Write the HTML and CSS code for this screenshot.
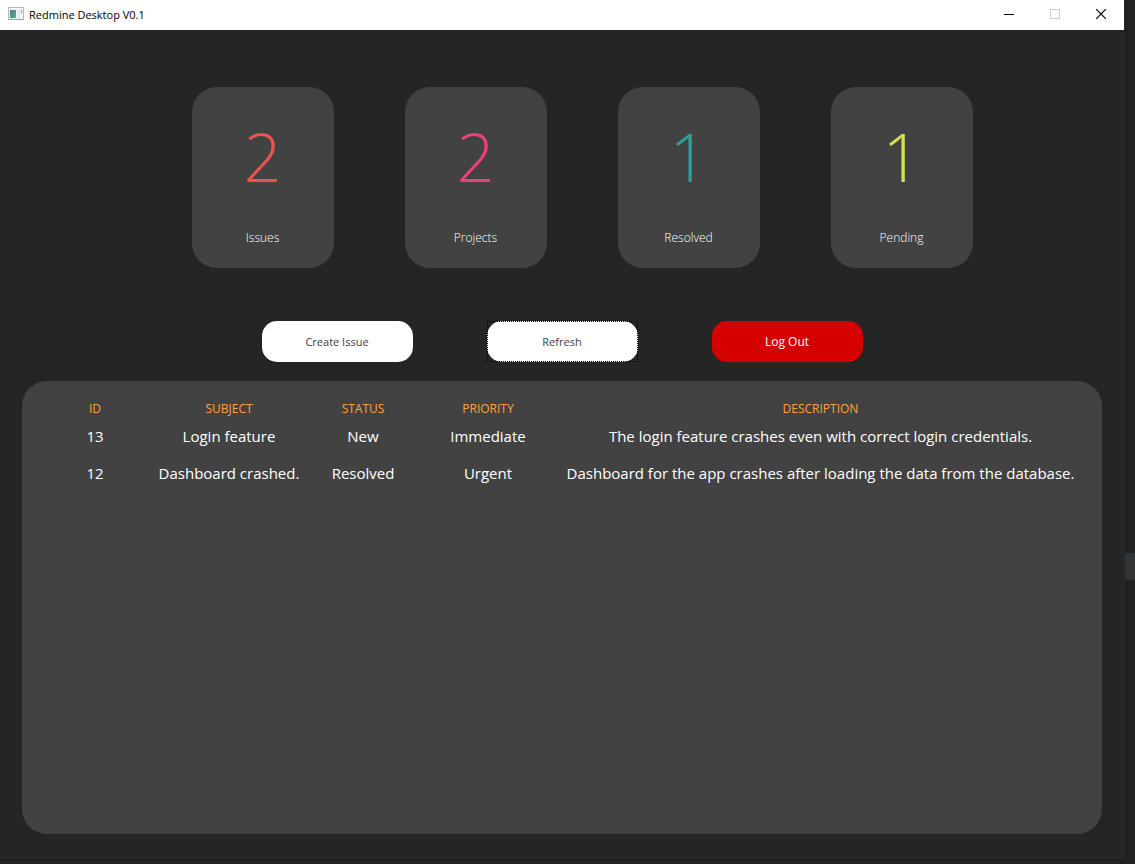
FILE: index.html
```
<!DOCTYPE html>
<html lang="en">
<head>
<meta charset="utf-8">
<title>Redmine Desktop V0.1</title>
<link rel="stylesheet" href="styles.css">
</head>
<body>
<div class="desktop">
  <div class="window">
    <header class="titlebar">
      <svg class="app-icon" width="16" height="14" viewBox="0 0 16 14" aria-hidden="true">
        <defs>
          <linearGradient id="pane" x1="0" y1="0" x2="1" y2="1">
            <stop offset="0" stop-color="#4a7da0"/>
            <stop offset="1" stop-color="#58b080"/>
          </linearGradient>
        </defs>
        <rect x="0.5" y="0.5" width="15" height="12" fill="#f4f5f7" stroke="#b4b8c0"/>
        <rect x="1" y="12" width="14" height="1" fill="#9da1a8"/>
        <rect x="2" y="3" width="6" height="8" fill="url(#pane)"/>
        <rect x="9" y="3" width="3" height="8" fill="#e6e9ee"/>
        <path d="M12.5 3h1.500v5z" fill="#7fb3a0"/>
      </svg>
      <span class="title">Redmine Desktop V0.1</span>
      <div class="controls">
        <button class="control" aria-label="Minimize"><svg width="10" height="10" viewBox="0 0 10 10"><path d="M0 5.5h10" stroke="#000"/></svg></button>
        <button class="control" aria-label="Maximize" disabled><svg width="10" height="10" viewBox="0 0 10 10"><rect x="0.5" y="0.5" width="9" height="9" fill="none" stroke="#ccc"/></svg></button>
        <button class="control" aria-label="Close"><svg width="10" height="10" viewBox="0 0 10 10"><path d="M0 0l10 10M10 0L0 10" stroke="#000" stroke-width="1.2"/></svg></button>
      </div>
    </header>
    <main class="content">
      <section class="stats">
        <div class="card"><span class="count issues">2</span><span class="label">Issues</span></div>
        <div class="card"><span class="count projects">2</span><span class="label">Projects</span></div>
        <div class="card"><span class="count resolved">1</span><span class="label">Resolved</span></div>
        <div class="card"><span class="count pending">1</span><span class="label">Pending</span></div>
      </section>
      <div class="actions">
        <button class="action">Create Issue</button>
        <button class="action focused">Refresh</button>
        <button class="action danger">Log Out</button>
      </div>
      <section class="panel">
        <table class="issue-table">
          <colgroup><col class="c-id"><col class="c-subject"><col class="c-status"><col class="c-priority"><col></colgroup>
          <thead>
            <tr><th>ID</th><th>SUBJECT</th><th>STATUS</th><th>PRIORITY</th><th>DESCRIPTION</th></tr>
          </thead>
          <tbody>
            <tr><td>13</td><td>Login feature</td><td>New</td><td>Immediate</td><td>The login feature crashes even with correct login credentials.</td></tr>
            <tr><td>12</td><td>Dashboard crashed.</td><td>Resolved</td><td>Urgent</td><td>Dashboard for the app crashes after loading the data from the database.</td></tr>
          </tbody>
        </table>
      </section>
    </main>
  </div>
  <div class="behind"><div class="behind-thumb"></div></div>
</div>
</body>
</html>
```
FILE: styles.css
```
* { box-sizing: border-box; }

body {
  margin: 0;
  background: #212121;
  font-family: "Open Sans", "Noto Sans", sans-serif;
}

.desktop {
  display: flex;
  min-height: 100vh;
  padding-bottom: 6px;
}

.window {
  flex: 1;
  display: flex;
  flex-direction: column;
  background: #252525;
  border-bottom: 1px solid #2b2b2b;
}

.behind {
  width: 11px;
  display: flex;
  flex-direction: column;
  padding-top: 553px;
  background: linear-gradient(to right, #1e1e1e, #232323);
  border-left: 1px solid #292929;
}

.behind-thumb {
  height: 27px;
  background: #313437;
}

.titlebar {
  display: flex;
  align-items: center;
  height: 30px;
  padding: 0 0 2px 8px;
  background: #fff;
}

.title {
  margin-left: 5px;
  color: #000;
  font-size: 11px;
}

.controls {
  display: flex;
  align-self: stretch;
  margin-left: auto;
}

.control {
  display: flex;
  align-items: center;
  justify-content: center;
  width: 46px;
  padding: 0;
  border: 0;
  background: none;
}

.content {
  flex: 1;
  display: flex;
  flex-direction: column;
  padding: 57px 22px 23px;
}

.stats {
  display: flex;
  justify-content: center;
  gap: 71px;
  padding-left: 40px;
}

.card {
  display: flex;
  flex-direction: column;
  align-items: center;
  width: 142px;
  height: 181px;
  padding-top: 29px;
  border-radius: 25px;
  background: #424242;
}

.count {
  font-size: 66px;
  font-weight: 300;
  line-height: 80px;
}

.issues { color: #ef5350; }
.projects { color: #ec407a; }
.resolved { color: #26a69a; }
.pending { color: #d4e157; }

.label {
  margin-top: 32px;
  color: #fff;
  font-size: 12px;
  font-weight: 300;
  line-height: 20px;
}

.actions {
  display: flex;
  justify-content: center;
  gap: 74px;
  margin: 53px 0 19px;
}

.action {
  width: 151px;
  height: 41px;
  padding: 0;
  border: 0;
  border-radius: 15px;
  background: #fff;
  color: #424242;
  font-family: inherit;
  font-size: 11px;
}

.focused {
  position: relative;
}

.focused::after {
  content: "";
  position: absolute;
  inset: 0;
  border: 1px dotted #000;
}

.danger {
  background: #d50000;
  color: #fff;
  font-size: 12px;
}

.panel {
  flex: 1;
  padding: 20px 15px 20px 14px;
  border-radius: 25px;
  background: #424242;
}

.issue-table {
  width: 100%;
  border-collapse: collapse;
  table-layout: fixed;
  color: #fff;
  text-align: center;
}

.c-id, .c-status { width: 118px; }
.c-subject { width: 150px; }
.c-priority { width: 132px; }

th {
  height: 16px;
  padding: 0;
  color: #ffa13b;
  font-size: 12px;
  font-weight: 400;
  line-height: 16px;
}

td {
  height: 37px;
  padding: 0;
  font-size: 15px;
  line-height: 20px;
  white-space: nowrap;
}
```
